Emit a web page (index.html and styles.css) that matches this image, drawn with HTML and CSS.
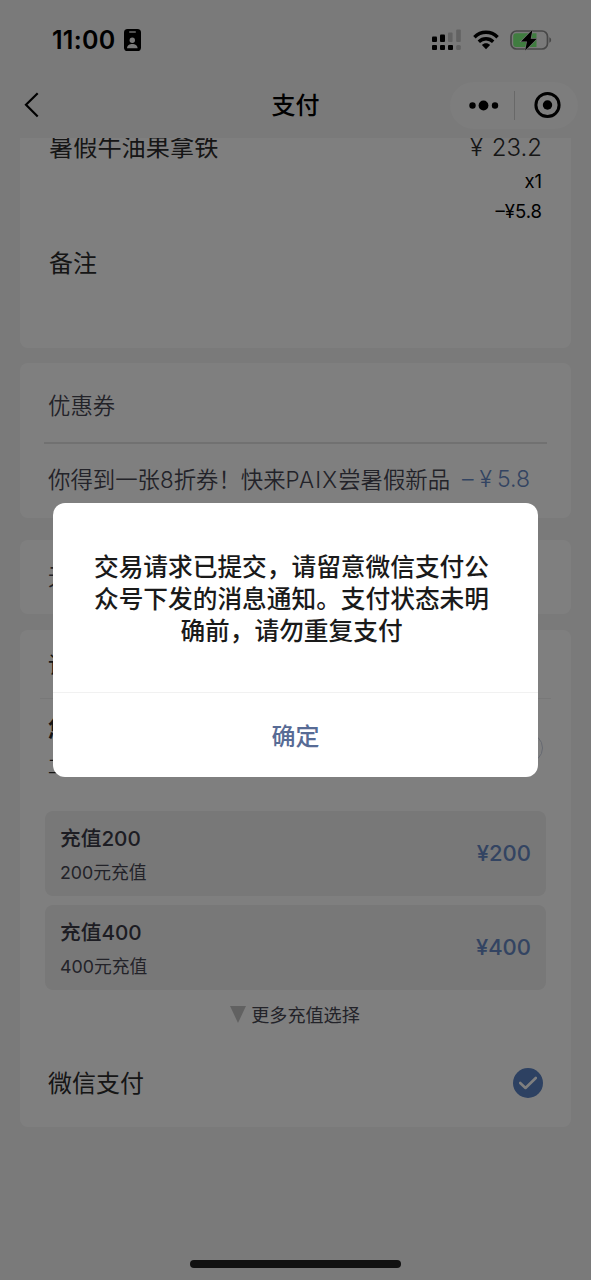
FILE: index.html
```html
<!DOCTYPE html>
<html lang="zh-CN">
<head>
<meta charset="utf-8">
<title>支付</title>
<link rel="stylesheet" href="styles.css">
</head>
<body>
<div class="screen">
  <header class="status-bar">
    <div class="status-left">
      <span class="clock">11:00</span>
      <svg class="id-badge" width="17" height="22" viewBox="0 0 17 22">
        <rect width="17" height="22" rx="3.6" fill="#000"/>
        <rect x="5" y="2.2" width="7" height="1.5" rx=".7" fill="#d5d5d5"/>
        <circle cx="8.3" cy="11.2" r="2.7" fill="#f4f4f4"/>
        <path d="M3 19.3c.3-3.2 2.6-4.2 5.3-4.2s5 1 5.3 4.2z" fill="#f4f4f4"/>
      </svg>
    </div>
    <div class="status-right">
      <svg width="30" height="22" viewBox="0 0 30 22">
        <g fill="#000">
          <rect x="0" y="7.500" width="5" height="5.500" rx="1"/>
          <rect x="8" y="5.500" width="5" height="7.500" rx="1"/>
          <rect x="0" y="16" width="5" height="5" rx="1"/>
          <rect x="8" y="16" width="5" height="5" rx="1"/>
          <rect x="16" y="16" width="5" height="5" rx="1"/>
        </g>
        <g fill="#c4c4c4">
          <rect x="16" y="3.500" width="4.6" height="9.500" rx="1"/>
          <rect x="24.2" y="0.500" width="4.6" height="12.500" rx="1"/>
          <rect x="24.2" y="16" width="4.6" height="5" rx="1.5"/>
        </g>
      </svg>
      <svg class="wifi" width="26" height="20" viewBox="0 0 26 20">
        <g fill="none" stroke="#000" stroke-width="3.4">
          <path d="M1.4 7.2C8 .6 18 .6 24.6 7.2"/>
          <path d="M5.8 11.7c4.1-4 10.3-4 14.4 0"/>
        </g>
        <path d="M8.9 14.9c2.3-2.2 5.9-2.2 8.2 0L13 19.2z" fill="#000"/>
      </svg>
      <svg class="battery" width="42" height="22" viewBox="0 0 42 22">
        <rect x="1" y="2" width="36.5" height="18" rx="5.5" fill="none" stroke="#8e8e8e" stroke-width="1.7"/>
        <path d="M39.3 8.2c2.4.7 2.4 4.8 0 5.5z" fill="#8e8e8e"/>
        <path d="M6.2 4.2H26.5v13.7H6.2a3 3 0 0 1-3-3V7.2a3 3 0 0 1 3-3z" fill="#80fa80"/>
        <path d="M22.500.8 11 12.400h6L15.200 21.500 26.800 9.700h-6.100z" fill="#000" stroke="#f4f4f4" stroke-width="1.200" paint-order="stroke"/>
      </svg>
    </div>
  </header>

  <nav class="nav-bar">
    <svg class="back" width="16" height="26" viewBox="0 0 16 26"><path d="M13.700 1.300 2 12.800l11.700 11.700" fill="none" stroke="#000" stroke-width="2.200"/></svg>
    <h1 class="nav-title">支付</h1>
    <div class="capsule">
      <svg width="128" height="47" viewBox="0 0 128 47">
        <circle cx="22.500" cy="23.500" r="3.200"/><circle cx="33.500" cy="23.500" r="4.900"/><circle cx="45" cy="23.500" r="3.200"/>
        <path d="M64.500 9v29" stroke="#d0d0d0" stroke-width="1"/>
        <circle cx="97.500" cy="23" r="11.600" fill="none" stroke="#000" stroke-width="3"/><circle cx="97.500" cy="23" r="4.700"/>
      </svg>
    </div>
  </nav>

  <main class="content">
    <section class="card order">
      <div class="order-line"><span>暑假牛油果拿铁</span><span class="item-price">¥ 23.2</span></div>
      <div class="item-sub">x1</div>
      <div class="item-sub">–¥5.8</div>
      <div class="remark">备注</div>
    </section>

    <section class="card coupon">
      <div class="coupon-title">优惠券</div>
      <div class="coupon-row"><span>你得到一张8折券！快来<span class="brand">PAIX</span>尝暑假新品</span><span class="coupon-value"><span>–</span><span class="yen">¥</span><span>5.8</span></span></div>
    </section>

    <section class="card plain">无</section>

    <section class="card pay">
      <div class="pay-title">请</div>
      <div class="balance">
        <div><div class="balance-name">您</div><div class="balance-note">工</div></div>
        <span class="radio"></span>
      </div>
      <div class="topup"><div><div class="topup-name">充值200</div><div class="topup-note">200元充值</div></div><span class="topup-price">¥200</span></div>
      <div class="topup"><div><div class="topup-name">充值400</div><div class="topup-note">400元充值</div></div><span class="topup-price">¥400</span></div>
      <div class="more"><svg width="16" height="17" viewBox="0 0 16 17"><path d="M0 0h16L8 17z" fill="#c2c2c2"/></svg><span>更多充值选择</span></div>
      <div class="wechat"><span>微信支付</span>
        <svg width="30" height="30" viewBox="0 0 30 30"><circle cx="15" cy="15" r="15" fill="#5a82c4"/><path d="m7.200 15 5.300 5L22.800 10" fill="none" stroke="#fff" stroke-width="2.600" stroke-linecap="round" stroke-linejoin="round"/></svg>
      </div>
    </section>
  </main>
  <div class="home-indicator"></div>
</div>

<div class="mask">
  <div class="dialog">
    <p class="dialog-text">交易请求已提交，请留意微信支付公众号下发的消息通知。支付状态未明确前，请勿重复支付</p>
    <div class="dialog-action">确定</div>
  </div>
</div>
</body>
</html>
```
FILE: styles.css
```css
* { box-sizing: border-box; }
body {
  margin: 0;
  font-family: Inter, "Noto Sans CJK SC", sans-serif;
  color: #2c2c2c;
}
.screen {
  width: 591px;
  height: 1280px;
  display: flex;
  flex-direction: column;
  background: #f4f4f4;
  overflow: hidden;
}
.status-bar {
  height: 80px;
  flex: none;
  display: flex;
  justify-content: space-between;
  align-items: center;
  padding: 0 38px 0 52px;
}
.status-left, .status-right { display: flex; align-items: center; }
.clock { font-size: 25px; font-weight: 600; color: #000; width: 72px; letter-spacing: 0.3px; }
.wifi { margin-left: 11px; }
.battery { margin-left: 11px; margin-right: 1px; }

.nav-bar {
  height: 58px;
  flex: none;
  display: grid;
  grid-template-columns: 1fr auto 1fr;
  align-items: center;
  padding: 0 13px 8px;
}
.nav-title {
  margin: 2px 0 0;
  font-size: 24px;
  line-height: 36px;
  font-weight: 500;
  color: #000;
}
.back { margin-left: 11px; }
.capsule {
  justify-self: end;
  width: 128px;
  height: 47px;
  border-radius: 24px;
  background: #fafafa;
}
.capsule svg { display: block; }

.content { height: 1110px; overflow: hidden; padding: 0 20px; }
.card { background: #fff; border-radius: 8px; overflow: hidden; }

.order { height: 230px; margin-top: -20px; padding: 12px 29px 0; }
.order-line { display: flex; justify-content: space-between; height: 36px; line-height: 36px; font-size: 24.2px; }
.item-price { font-weight: 350; font-size: 24px; word-spacing: 2px; }
.item-sub { height: 30px; line-height: 30px; text-align: right; font-size: 18.5px; color: #000; }
.remark { margin-top: 20px; font-size: 24px; line-height: 36px; }

.coupon { height: 155px; margin-top: 15px; padding: 0 24px; font-size: 22.4px; color: #464652; font-weight: 350; }
.coupon-title { height: 81px; padding: 0 4px; line-height: 86px; border-bottom: 2px solid #e2e2e2; }
.coupon-row { display: flex; justify-content: space-between; padding: 0 17px 0 4px; line-height: 71px; white-space: nowrap; }
.brand { letter-spacing: 1.1px; }
.coupon-value { display: flex; color: #6688c4; font-size: 23px; }
.coupon-value .yen { margin: 0 5px 0 6px; }

.plain { height: 74px; margin-top: 22px; padding-left: 28px; font-size: 22.4px; line-height: 74px; color: #464652; }

.pay { height: 497px; margin-top: 16px; padding: 0 25px; }
.pay-title { height: 69px; margin: 0 -5px; padding-left: 8px; border-bottom: 1px solid #f0f0f0; line-height: 69px; font-size: 22.4px; }
.balance { display: flex; justify-content: space-between; align-items: center; height: 97px; padding: 0 3px; margin-bottom: 15px; }
.balance-name { font-size: 22.4px; line-height: 38px; font-weight: 700; }
.balance-note { font-size: 18px; line-height: 38px; }
.radio { width: 30px; height: 30px; border: 1px solid #cbd2e2; border-radius: 50%; }
.topup {
  height: 85px;
  margin-bottom: 9px;
  padding: 3px 15px 0;
  display: flex;
  justify-content: space-between;
  align-items: center;
  border-radius: 8px;
  background: #f0f0f0;
  color: #464652;
}
.topup-name { font-size: 20.7px; line-height: 35px; font-weight: 500; color: #3a3a46; }
.topup-note { font-size: 17.8px; line-height: 34px; }
.topup-price { font-size: 22px; font-weight: 500; color: #6688c4; margin-top: -5px; }
.more { display: flex; justify-content: center; align-items: center; gap: 5px; height: 30px; margin-right: 1px; font-size: 18.1px; color: #464652; }
.wechat { display: flex; justify-content: space-between; align-items: center; height: 108px; padding: 0 3px; font-size: 24px; }
.wechat span { margin-top: -3px; }

.home-indicator { width: 211px; height: 8px; flex: none; margin: 12px auto 0; border-radius: 4px; background: #222; }

.mask { position: absolute; inset: 0; height: 1280px; background: rgba(0, 0, 0, .5); display: grid; place-items: center; }
.dialog { width: 485px; height: 274px; border-radius: 12px; background: #fff; overflow: hidden; display: flex; flex-direction: column; }
.dialog-text {
  flex: 1;
  margin: 0;
  padding: 48px 44px 0 36px;
  font-size: 24.7px;
  line-height: 32px;
  font-weight: 500;
  color: #1a1a1a;
  text-align: center;
}
.dialog-action { height: 85px; border-top: 1px solid #f1f1f1; text-align: center; line-height: 87px; font-size: 24px; font-weight: 500; color: #576b95; }
```
